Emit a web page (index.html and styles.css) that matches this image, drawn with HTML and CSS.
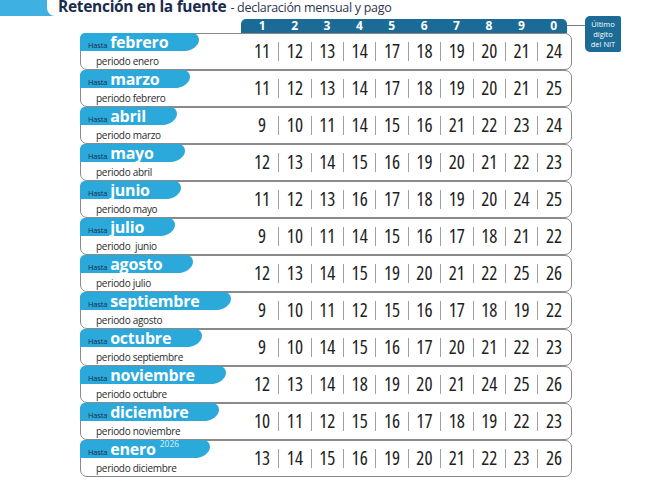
FILE: index.html
```html
<!DOCTYPE html>
<html lang="es">
<head>
<meta charset="utf-8">
<link rel="stylesheet" href="styles.css">
</head>
<body>
<header class="head">
  <div class="title-wrap">
    <h1 class="title"><strong>Retención en la fuente</strong> <span class="sub">- declaración mensual y pago</span></h1>
  </div>
</header>
<section class="nit">
  <div class="main">
    <div class="digits"><span>1</span><span>2</span><span>3</span><span>4</span><span>5</span><span>6</span><span>7</span><span>8</span><span>9</span><span>0</span></div>

    <div class="row"><div class="label"><div class="tab"><span class="hasta">Hasta</span><span class="mes">febrero</span></div><div class="periodo">periodo enero</div></div>
      <div class="nums"><span>11</span><span>12</span><span>13</span><span>14</span><span>17</span><span>18</span><span>19</span><span>20</span><span>21</span><span>24</span></div></div>

    <div class="row"><div class="label"><div class="tab"><span class="hasta">Hasta</span><span class="mes">marzo</span></div><div class="periodo">periodo febrero</div></div>
      <div class="nums"><span>11</span><span>12</span><span>13</span><span>14</span><span>17</span><span>18</span><span>19</span><span>20</span><span>21</span><span>25</span></div></div>

    <div class="row"><div class="label"><div class="tab"><span class="hasta">Hasta</span><span class="mes">abril</span></div><div class="periodo">periodo marzo</div></div>
      <div class="nums"><span>9</span><span>10</span><span>11</span><span>14</span><span>15</span><span>16</span><span>21</span><span>22</span><span>23</span><span>24</span></div></div>

    <div class="row"><div class="label"><div class="tab"><span class="hasta">Hasta</span><span class="mes">mayo</span></div><div class="periodo">periodo abril</div></div>
      <div class="nums"><span>12</span><span>13</span><span>14</span><span>15</span><span>16</span><span>19</span><span>20</span><span>21</span><span>22</span><span>23</span></div></div>

    <div class="row"><div class="label"><div class="tab"><span class="hasta">Hasta</span><span class="mes">junio</span></div><div class="periodo">periodo mayo</div></div>
      <div class="nums"><span>11</span><span>12</span><span>13</span><span>16</span><span>17</span><span>18</span><span>19</span><span>20</span><span>24</span><span>25</span></div></div>

    <div class="row"><div class="label"><div class="tab"><span class="hasta">Hasta</span><span class="mes">julio</span></div><div class="periodo">periodo&nbsp; junio</div></div>
      <div class="nums"><span>9</span><span>10</span><span>11</span><span>14</span><span>15</span><span>16</span><span>17</span><span>18</span><span>21</span><span>22</span></div></div>

    <div class="row"><div class="label"><div class="tab"><span class="hasta">Hasta</span><span class="mes">agosto</span></div><div class="periodo">periodo julio</div></div>
      <div class="nums"><span>12</span><span>13</span><span>14</span><span>15</span><span>19</span><span>20</span><span>21</span><span>22</span><span>25</span><span>26</span></div></div>

    <div class="row"><div class="label"><div class="tab"><span class="hasta">Hasta</span><span class="mes">septiembre</span></div><div class="periodo">periodo agosto</div></div>
      <div class="nums"><span>9</span><span>10</span><span>11</span><span>12</span><span>15</span><span>16</span><span>17</span><span>18</span><span>19</span><span>22</span></div></div>

    <div class="row"><div class="label"><div class="tab"><span class="hasta">Hasta</span><span class="mes">octubre</span></div><div class="periodo">periodo septiembre</div></div>
      <div class="nums"><span>9</span><span>10</span><span>14</span><span>15</span><span>16</span><span>17</span><span>20</span><span>21</span><span>22</span><span>23</span></div></div>

    <div class="row"><div class="label"><div class="tab"><span class="hasta">Hasta</span><span class="mes">noviembre</span></div><div class="periodo">periodo octubre</div></div>
      <div class="nums"><span>12</span><span>13</span><span>14</span><span>18</span><span>19</span><span>20</span><span>21</span><span>24</span><span>25</span><span>26</span></div></div>

    <div class="row"><div class="label"><div class="tab"><span class="hasta">Hasta</span><span class="mes">diciembre</span></div><div class="periodo">periodo noviembre</div></div>
      <div class="nums"><span>10</span><span>11</span><span>12</span><span>15</span><span>16</span><span>17</span><span>18</span><span>19</span><span>22</span><span>23</span></div></div>

    <div class="row"><div class="label"><div class="tab"><span class="hasta">Hasta</span><span class="mes">enero</span><sup class="year">2026</sup></div><div class="periodo">periodo diciembre</div></div>
      <div class="nums"><span>13</span><span>14</span><span>15</span><span>16</span><span>19</span><span>20</span><span>21</span><span>22</span><span>23</span><span>26</span></div></div>
  </div>
  <div class="side">
    <div class="conn"></div>
    <div class="nitbox">Último<br>dígito<br>del NIT</div>
  </div>
</section>
</body>
</html>
```
FILE: styles.css
```css
html, body {
  margin: 0;
  padding: 0;
  background: #ffffff;
}
body {
  width: 650px;
  height: 487px;
  overflow: hidden;
  font-family: "Open Sans", "Noto Sans", sans-serif;
  color: #1b2b4d;
}
.head {
  height: 16px;
  background: linear-gradient(#3fb0e2, #3fb0e2) 0 0 / 60px 20px no-repeat;
  position: relative;
  z-index: 1;
}
.title-wrap {
  margin-left: 47px;
  height: 16px;
  background: #ffffff;
  border-bottom-left-radius: 8px;
  padding-left: 11px;
  display: flex;
  align-items: flex-end;
}
.title {
  margin: 0 0 -4px 0;
  font-size: 16px;
  line-height: 24px;
  white-space: nowrap;
  font-weight: 400;
  color: #1b2b4d;
}
.title strong {
  font-size: 15.5px;
  font-weight: 700;
  letter-spacing: -0.3px;
}
.sub {
  font-size: 12.5px;
  letter-spacing: -0.3px;
  color: #2a3550;
}
.nit {
  display: flex;
  align-items: flex-start;
  margin-left: 80px;
}
.main {
  width: 492px;
}
.digits {
  margin-left: 161px;
  margin-top: 3px;
  width: 321px;
  height: 14px;
  padding-left: 5px;
  background: #1b6b96;
  border-radius: 5px 5px 0 0;
  display: grid;
  grid-template-columns: repeat(10, 32.4px);
  color: #ffffff;
  font-weight: 700;
  font-size: 12px;
  line-height: 14px;
  text-align: center;
}
.row {
  box-sizing: border-box;
  height: 37px;
  border: 1px solid #8a8a8a;
  border-radius: 7px;
  display: flex;
  align-items: center;
  background: #ffffff;
}
.label {
  width: 164.8px;
  align-self: stretch;
  display: flex;
  flex-direction: column;
  align-items: flex-start;
}
.tab {
  margin: -1px 0 0 -1px;
  height: 18px;
  display: flex;
  align-items: baseline;
  padding: 0 31px 0 8px;
  background: #2ba9db;
  border-radius: 7px 9px 22px 0 / 7px 9px 16px 0;
  line-height: 18px;
}
.hasta {
  font-size: 7.5px;
  color: #1b2b4d;
  margin-right: 3px;
  letter-spacing: -0.2px;
}
.mes {
  font-size: 16px;
  font-weight: 700;
  color: #ffffff;
  letter-spacing: -0.2px;
}
.year {
  font-size: 8.5px;
  color: #d9f0fa;
  align-self: flex-start;
  line-height: 10px;
  margin-left: 4px;
  margin-top: -1px;
}
.periodo {
  margin: 3px 0 0 15px;
  font-size: 10px;
  line-height: 14px;
  color: #2a2a2a;
  letter-spacing: -0.3px;
  white-space: nowrap;
}
.nums {
  display: grid;
  grid-template-columns: repeat(10, 32.4px);
  align-items: center;
  font-family: "Open Sans", sans-serif;
  font-stretch: 75%;
  font-size: 19px;
  color: #1e1e1e;
  text-align: center;
}
.nums span {
  line-height: 19px;
}
.nums span + span {
  border-left: 1px solid #a0a0a0;
}
.side {
  display: flex;
  align-items: flex-start;
  margin-left: -5px;
}
.conn {
  width: 18px;
  height: 1px;
  margin-top: 9px;
  background: #7d7d7d;
}
.nitbox {
  width: 36px;
  height: 36px;
  box-sizing: border-box;
  padding-top: 3px;
  background: #1b6b96;
  border-radius: 5px 2px 2px 5px;
  color: #ffffff;
  font-size: 7.5px;
  line-height: 10px;
  text-align: center;
}
```
